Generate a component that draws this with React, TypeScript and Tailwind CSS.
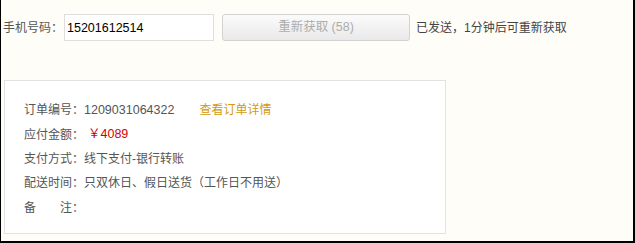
export default function App() {
  const rows: { label: string; value: React.ReactNode }[] = [
    {
      label: "订单编号：",
      value: (
        <>
          <span className="text-[12.5px]">1209031064322</span>
          <a className="ml-[25px] text-[#d4990f] cursor-pointer">查看订单详情</a>
        </>
      ),
    },
    {
      label: "应付金额：",
      value: <span className="ml-[4px] text-[12.5px] text-[#d40000]">￥4089</span>,
    },
    { label: "支付方式：", value: <span>线下支付-银行转账</span> },
    { label: "配送时间：", value: <span>只双休日、假日送货（工作日不用送）</span> },
    { label: "备\u3000\u3000注：", value: null },
  ]

  return (
    <div className="h-[243px] w-[635px] border-l border-r-2 border-b-2 border-black bg-[#fffdf8] text-[12px] text-[#555] font-['Liberation_Sans','Noto_Sans_CJK_SC',sans-serif]">
      <div className="flex items-center pt-[14px] pl-[2px]">
        <span className="w-[61px] whitespace-nowrap">手机号码：</span>
        <input
          readOnly
          value="15201612514"
          className="h-[27px] w-[150px] border border-[#dedede] bg-white px-[2px] text-[12.5px] text-black outline-none"
        />
        <button
          disabled
          className="ml-[8px] h-[27px] w-[188px] rounded-[3px] border border-[#d2d2d2] bg-gradient-to-b from-[#fbfbfb] to-[#e9e9e9] text-[12.5px] text-[#adadad]"
        >
          重新获取 (58)
        </button>
        <span className="ml-[6px] text-[#444]">已发送，1分钟后可重新获取</span>
      </div>

      <div className="mt-[39px] ml-[3px] h-[154px] w-[442px] border border-[#e2e2e2] bg-white pt-[17px] pl-[19px]">
        {rows.map((row) => (
          <div key={row.label} className="flex h-[24.4px] items-center whitespace-nowrap">
            <span>{row.label}</span>
            {row.value}
          </div>
        ))}
      </div>
    </div>
  )
}
